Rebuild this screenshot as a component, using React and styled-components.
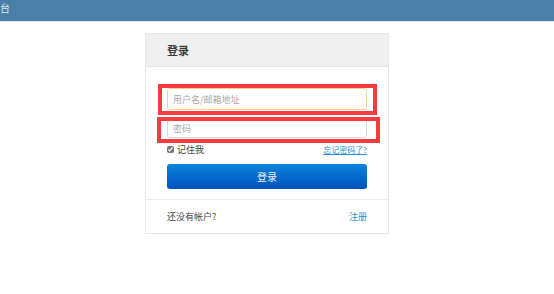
import styled, { createGlobalStyle } from 'styled-components';

const GlobalStyle = createGlobalStyle`
  html, body {
    margin: 0;
    padding: 0;
    background: #ffffff;
    font-family: "Noto Sans CJK SC", "Liberation Sans", sans-serif;
    color: #333;
  }
`;

const TopBar = styled.header`
  height: 21px;
  background: #4a7fa7;
  border-bottom: 1px solid #dde7ef;
  display: flex;
  align-items: center;
  overflow: hidden;
`;

const Brand = styled.span`
  color: #dce9f3;
  font-size: 10px;
  line-height: 1;
  margin-top: -5px;
`;

const Main = styled.main`
  padding: 11px 0 0 145px;
`;

const Card = styled.section`
  width: 242px;
  border: 1px solid #e6e6e6;
  background: #fff;
`;

const CardHeader = styled.div`
  height: 32px;
  background: #f0f0f0;
  border-bottom: 1px solid #e4e4e4;
  display: flex;
  align-items: center;
  padding-left: 21px;
  font-size: 11px;
  font-weight: bold;
  color: #3a3a3a;
`;

const Form = styled.form`
  position: relative;
  padding: 21px 21px 10px 21px;
  display: flex;
  flex-direction: column;
  border-bottom: 1px solid #ececec;
`;

const Input = styled.input`
  box-sizing: border-box;
  width: 200px;
  height: ${(p) => p.$h || 21}px;
  margin-bottom: ${(p) => p.$mb || 0}px;
  padding: 0 5px;
  border: 1px solid ${(p) => (p.$focus ? '#f3cf98' : '#d8d8d8')};
  border-radius: 3px;
  font-family: inherit;
  font-size: 9px;
  outline: none;
  &::placeholder {
    color: #a8a8a8;
  }
`;

const OptionRow = styled.div`
  width: 200px;
  display: flex;
  justify-content: space-between;
  align-items: center;
  height: 16px;
  margin-top: 3px;
  font-size: 8px;
`;

const Remember = styled.label`
  display: flex;
  align-items: center;
  gap: 3px;
  color: #444;
  font-size: 9px;
  input {
    margin: 0;
    width: 7px;
    height: 7px;
    accent-color: #777;
  }
`;

const Link = styled.a`
  color: #2a8fd0;
  font-size: 8px;
  text-decoration: underline;
`;

const FooterLink = styled(Link)`
  font-size: 9px;
  text-decoration: none;
`;

const Submit = styled.button`
  margin-top: 7px;
  width: 200px;
  height: 25px;
  border: none;
  border-radius: 3px;
  background: linear-gradient(#0d84d8, #0050bd);
  color: #e8f0ff;
  font-family: inherit;
  font-size: 10px;
`;

const Footer = styled.div`
  height: 33px;
  display: flex;
  align-items: center;
  justify-content: space-between;
  padding: 0 21px;
  font-size: 9px;
  color: #444;
`;

const Marker = styled.div`
  position: absolute;
  border: 4px solid #f63a3e;
  pointer-events: none;
`;

export default function App() {
  return (
    <>
      <GlobalStyle />
      <TopBar>
        <Brand>台</Brand>
      </TopBar>
      <Main>
        <Card>
          <CardHeader>登录</CardHeader>
          <Form>
            <Input $focus $h={22} $mb={8} placeholder="用户名/邮箱地址" />
            <Input $h={20} placeholder="密码" type="password" />
            <OptionRow>
              <Remember>
                <input type="checkbox" defaultChecked />
                记住我
              </Remember>
              <Link href="#">忘记密码了?</Link>
            </OptionRow>
            <Submit type="button">登录</Submit>
            <Marker style={{ left: 12, top: 17, width: 211, height: 23 }} />
            <Marker style={{ left: 11, top: 50, width: 215, height: 18 }} />
          </Form>
          <Footer>
            <span>还没有帐户?</span>
            <FooterLink href="#">注册</FooterLink>
          </Footer>
        </Card>
      </Main>
    </>
  );
}
